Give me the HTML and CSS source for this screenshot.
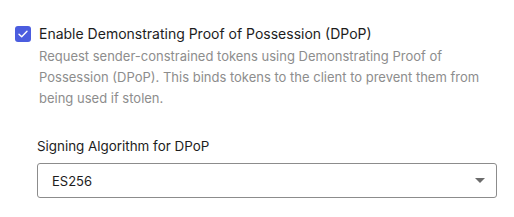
FILE: index.html
```html
<!DOCTYPE html>
<html>
<head>
<meta charset="utf-8">
<link rel="stylesheet" href="styles.css">
</head>
<body>
<div class="panel">
  <div class="check-row">
    <span class="checkbox">
      <svg width="10" height="8" viewBox="0 0 10 8"><path d="M1 4.2 L3.7 6.8 L9 1.2" fill="none" stroke="#fff" stroke-width="1.4" stroke-linecap="round" stroke-linejoin="round"/></svg>
    </span>
    <div class="check-text">
      <div class="check-label">Enable Demonstrating Proof of Possession (DPoP)</div>
      <div class="check-desc">Request sender-constrained tokens using Demonstrating Proof of Possession (DPoP). This binds tokens to the client to prevent them from being used if stolen.</div>
    </div>
  </div>
  <div class="field">
    <div class="field-label">Signing Algorithm for DPoP</div>
    <div class="select">
      <span class="select-value">ES256</span>
      <span class="caret"></span>
    </div>
  </div>
</div>
</body>
</html>
```
FILE: styles.css
```css
html, body {
  margin: 0;
  padding: 0;
  background: #fff;
}
body {
  font-family: Inter, "Liberation Sans", sans-serif;
}
.panel {
  padding: 26px 17px 0 15px;
}
.check-row {
  display: flex;
  gap: 8px;
  align-items: flex-start;
}
.checkbox {
  width: 16px;
  height: 16px;
  border-radius: 3px;
  background: #4b5ddf;
  display: flex;
  align-items: center;
  justify-content: center;
  flex: none;
}
.check-text {
  margin-top: -1px;
}
.check-label {
  font-size: 14px;
  line-height: 18px;
  color: #1d1d1d;
}
.check-desc {
  margin-top: 3px;
  font-size: 13px;
  line-height: 21px;
  color: #8d8d8d;
  max-width: 460px;
}
.field {
  margin-top: 28px;
  padding-left: 22px;
}
.field-label {
  font-size: 13.4px;
  line-height: 18px;
  color: #1d1d1d;
}
.select {
  margin-top: 8px;
  height: 33px;
  border: 1px solid #8c8c8c;
  border-radius: 3px;
  display: flex;
  align-items: center;
  justify-content: space-between;
  padding: 0 11px 0 14px;
}
.select-value {
  font-size: 13px;
  color: #1d1d1d;
}
.caret {
  width: 0;
  height: 0;
  border-left: 5px solid transparent;
  border-right: 5px solid transparent;
  border-top: 5px solid #6b6b6b;
}
```
